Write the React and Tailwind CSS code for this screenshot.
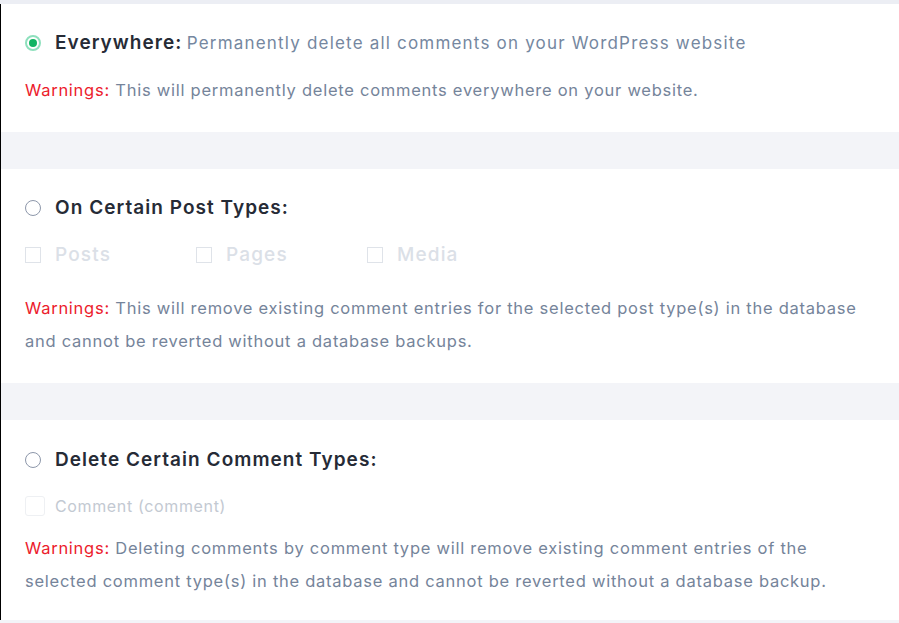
function Radio({ checked }) {
  if (checked) {
    return (
      <span className="flex h-4 w-4 shrink-0 items-center justify-center rounded-full border-2 border-[#8ee0bd] bg-white">
        <span className="h-2 w-2 rounded-full bg-[#10b462]" />
      </span>
    );
  }
  return <span className="h-4 w-4 shrink-0 rounded-full border-[1.5px] border-[#8d97aa] bg-white" />;
}

function Warning({ children }) {
  return (
    <p className="text-[16.5px] leading-[33px] tracking-[0.045em] text-[#75849a]">
      <span className="text-[#ec1c2d]">Warnings:</span> {children}
    </p>
  );
}

function Title({ children }) {
  return <span className="text-[19px] font-semibold tracking-[0.055em] text-[#262b36]">{children}</span>;
}

function Checkbox({ label }) {
  return (
    <label className="flex w-[171px] items-center gap-[14px]">
      <span className="h-4 w-4 shrink-0 border border-[#dfe3e9] bg-white" />
      <span className="text-[19px] font-medium tracking-[0.06em] text-[#dbe0e7]">{label}</span>
    </label>
  );
}

export default function App() {
  const font = { fontFamily: "Inter, 'Noto Sans', sans-serif" };
  return (
    <div className="h-[623px] w-[899px] overflow-hidden bg-[#f3f4f8]" style={font}>
      <div className="h-1 bg-[#eceef4]" />
      <div className="border-l border-black">
        <section className="flex h-[128px] flex-col bg-white pl-6 pt-[22px]">
          <div className="flex h-[34px] items-center gap-[14px]">
            <Radio checked />
            <div>
              <Title>Everywhere:</Title>{" "}
              <span className="text-[17px] tracking-[0.07em] text-[#7587a0]">Permanently delete all comments on your WordPress website</span>
            </div>
          </div>
          <div className="mt-[14px]">
            <Warning>This will permanently delete comments everywhere on your website.</Warning>
          </div>
        </section>

        <div className="h-[37px]" />

        <section className="flex h-[214px] flex-col bg-white pl-6 pr-6 pt-[22px]">
          <div className="flex h-[34px] items-center gap-[14px]">
            <Radio />
            <Title>On Certain Post Types:</Title>
          </div>
          <div className="mt-[17px] flex h-[26px] items-center">
            <Checkbox label="Posts" />
            <Checkbox label="Pages" />
            <Checkbox label="Media" />
          </div>
          <div className="mt-[24px] max-w-[850px]">
            <Warning>
              This will remove existing comment entries for the selected post type(s) in the database and cannot be reverted without a database backups.
            </Warning>
          </div>
        </section>

        <div className="h-[37px]" />

        <section className="flex h-[200px] flex-col bg-white pl-6 pr-6 pt-[23px]">
          <div className="flex h-[34px] items-center gap-[14px]">
            <Radio />
            <Title>Delete Certain Comment Types:</Title>
          </div>
          <label className="mt-[18px] flex h-[22px] items-center gap-[10px]">
            <span className="h-5 w-5 shrink-0 rounded-[3px] border border-[#eef0f3] bg-white" />
            <span className="text-[16px] tracking-[0.04em] text-[#c3c9d2]">Comment (comment)</span>
          </label>
          <div className="mt-[15px] max-w-[835px]">
            <Warning>
              Deleting comments by comment type will remove existing comment entries of the selected comment type(s) in the database and cannot be reverted without a database backup.
            </Warning>
          </div>
        </section>
      </div>
    </div>
  );
}
